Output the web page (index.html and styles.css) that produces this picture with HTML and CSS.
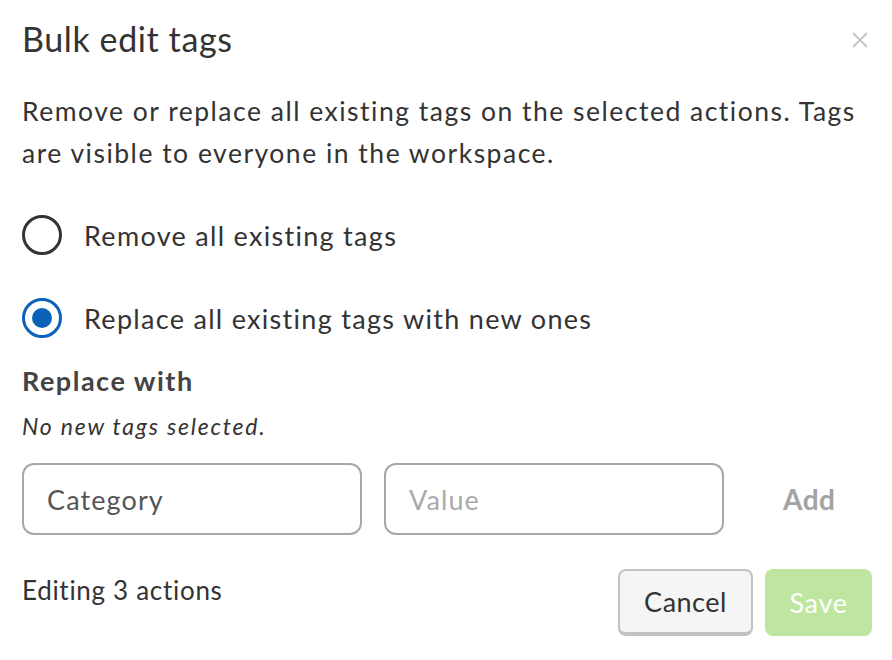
FILE: index.html
```html
<!DOCTYPE html>
<html>
<head>
<meta charset="utf-8">
<link rel="stylesheet" href="styles.css">
</head>
<body>
<div class="modal">
  <div class="header">
    <h1 class="title">Bulk edit tags</h1>
    <button class="close" aria-label="Close">
      <svg width="18" height="18" viewBox="0 0 18 18"><path d="M2 2L16 16M16 2L2 16" stroke="#c4c4c4" stroke-width="1.8" fill="none"/></svg>
    </button>
  </div>
  <p class="desc">Remove or replace all existing tags on the selected actions. Tags are visible to everyone in the workspace.</p>
  <label class="radio-row">
    <span class="radio"></span>
    <span class="radio-label">Remove all existing tags</span>
  </label>
  <label class="radio-row second">
    <span class="radio checked"><span class="dot"></span></span>
    <span class="radio-label">Replace all existing tags with new ones</span>
  </label>
  <div class="section-title">Replace with</div>
  <div class="empty">No new tags selected.</div>
  <div class="inputs">
    <div class="field filled">Category</div>
    <div class="field placeholder">Value</div>
    <div class="add">Add</div>
  </div>
  <div class="footer">
    <div class="count">Editing 3 actions</div>
    <div class="buttons">
      <button class="btn cancel">Cancel</button>
      <button class="btn save">Save</button>
    </div>
  </div>
</div>
</body>
</html>
```

FILE: styles.css
```css
html, body {
  margin: 0;
  padding: 0;
  background: #ffffff;
}
body {
  font-family: Lato, "Open Sans", sans-serif;
  color: #333333;
}
.modal {
  width: 892px;
  height: 660px;
  box-sizing: border-box;
  padding: 20px 20px 0 22px;
}
.header {
  display: flex;
  justify-content: space-between;
  align-items: flex-start;
  height: 40px;
}
.title {
  margin: 0;
  font-size: 34px;
  font-weight: 400;
  line-height: 37px;
  letter-spacing: 0.6px;
  color: #333;
}
.close {
  align-self: center;
  border: none;
  background: none;
  padding: 0;
  margin-right: 3px;
  width: 18px;
  height: 18px;
  display: flex;
}
.desc {
  margin: 30px 0 0 0;
  font-size: 26.5px;
  line-height: 42px;
  color: #333;
  letter-spacing: 1.5px;
}
.radio-row {
  display: flex;
  align-items: center;
  height: 44px;
  margin-top: 39px;
}
.radio-row.second {
  margin-top: 39px;
}
.radio {
  width: 40px;
  height: 40px;
  box-sizing: border-box;
  border: 3px solid #333;
  border-radius: 50%;
  display: flex;
  align-items: center;
  justify-content: center;
  flex: none;
}
.radio.checked {
  border-color: #0b62b8;
}
.dot {
  width: 20px;
  height: 20px;
  border-radius: 50%;
  background: #0b62b8;
}
.radio-label {
  margin-left: 22px;
  font-size: 27px;
  letter-spacing: 1.3px;
  color: #333;
}
.section-title {
  margin-top: 25px;
  font-size: 27px;
  font-weight: 700;
  line-height: 32px;
  letter-spacing: 1.5px;
  color: #444;
}
.empty {
  margin-top: 15px;
  font-size: 23px;
  font-style: italic;
  line-height: 28px;
  letter-spacing: 1.8px;
  color: #333;
}
.inputs {
  display: flex;
  align-items: center;
  gap: 22px;
  margin-top: 23px;
}
.field {
  width: 340px;
  height: 72px;
  box-sizing: border-box;
  border: 2px solid #a8a8a8;
  border-radius: 12px;
  padding-left: 23px;
  display: flex;
  align-items: center;
  font-size: 27px;
  letter-spacing: 1.1px;
}
.field.filled {
  color: #555;
}
.field.placeholder {
  color: #aaa;
}
.add {
  margin-left: 37px;
  font-size: 28px;
  font-weight: 700;
  color: #a3a3a3;
  letter-spacing: 0.5px;
}
.footer {
  display: flex;
  justify-content: space-between;
  align-items: flex-start;
  margin-top: 34px;
}
.count {
  margin-top: 5px;
  font-size: 26px;
  line-height: 32px;
  letter-spacing: 0.7px;
  color: #333;
}
.buttons {
  display: flex;
  gap: 12px;
}
.btn {
  font-family: Lato, "Open Sans", sans-serif;
  font-size: 27px;
  height: 67px;
  border-radius: 8px;
  box-sizing: border-box;
  padding: 0;
}
.cancel {
  width: 135px;
  background: #f5f5f5;
  color: #333;
  border: 2px solid #c2c2c2;
  border-bottom-width: 4px;
  letter-spacing: 0.5px;
}
.save {
  width: 107px;
  background: #bfe6a0;
  color: #ffffff;
  border: none;
  letter-spacing: 0.7px;
}
```
